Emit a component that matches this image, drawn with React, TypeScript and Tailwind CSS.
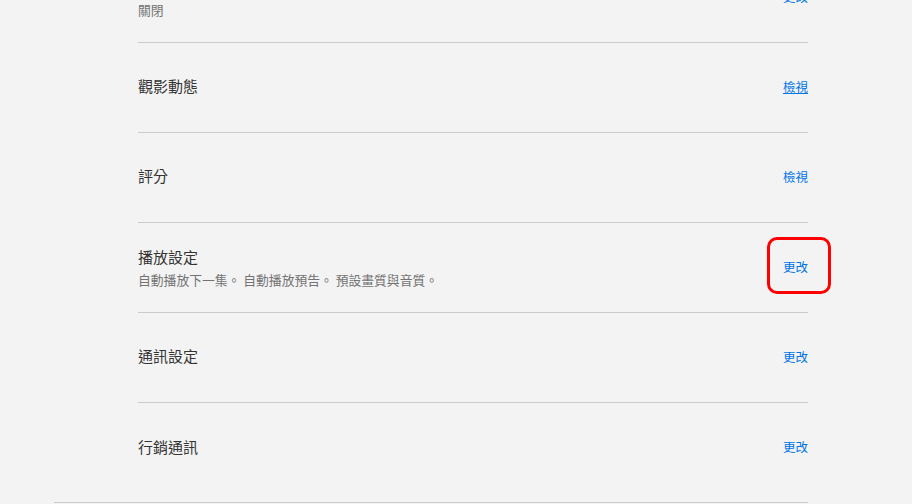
import React from 'react';

type Row = {
  title: string;
  subtitle?: string;
  action: string;
  underline?: boolean;
  highlight?: boolean;
  last?: boolean;
};

const rows: Row[] = [
  { title: '家長監護設定', subtitle: '關閉', action: '更改' },
  { title: '觀影動態', action: '檢視', underline: true },
  { title: '評分', action: '檢視' },
  { title: '播放設定', subtitle: '自動播放下一集。 自動播放預告。 預設畫質與音質。', action: '更改', highlight: true },
  { title: '通訊設定', action: '更改' },
  { title: '行銷通訊', action: '更改', last: true },
];

const SettingRow: React.FC<{ row: Row }> = ({ row }) => (
  <div
    className={`flex h-[90px] items-center justify-between ${row.last ? '' : 'border-b border-[#cccccc]'}`}
  >
    <div className={`flex flex-col ${row.subtitle ? '' : 'pb-[3px]'}`}>
      <div className="text-[15px] leading-[20px] text-[#333333]">{row.title}</div>
      {row.subtitle && (
        <div className="mt-[4px] text-[12.8px] leading-[18px] text-[#737373]">{row.subtitle}</div>
      )}
    </div>
    <div className="relative flex pb-[2px] leading-[18px]">
      <a
        href="#"
        className={`text-[12.5px] leading-[18px] text-[#0073e6] ${row.underline ? 'underline' : 'no-underline'}`}
      >
        {row.action}
      </a>
      {row.highlight && (
        <div className="pointer-events-none absolute left-[-16px] top-[-21px] h-[57px] w-[64px] rounded-[10px] border-[3px] border-[#ff0000]" />
      )}
    </div>
  </div>
);

export default function App() {
  return (
    <div
      className="h-[504px] w-full overflow-hidden bg-[#f3f3f3]"
      style={{ fontFamily: '"Noto Sans CJK TC", "Noto Sans", sans-serif' }}
    >
      <div className="ml-[54px] mt-[-47px] w-[754px] border-b border-[#cccccc] pb-[9px]">
        <div className="pl-[84px]">
          {rows.map((row) => (
            <SettingRow key={row.title} row={row} />
          ))}
        </div>
      </div>
    </div>
  );
}
